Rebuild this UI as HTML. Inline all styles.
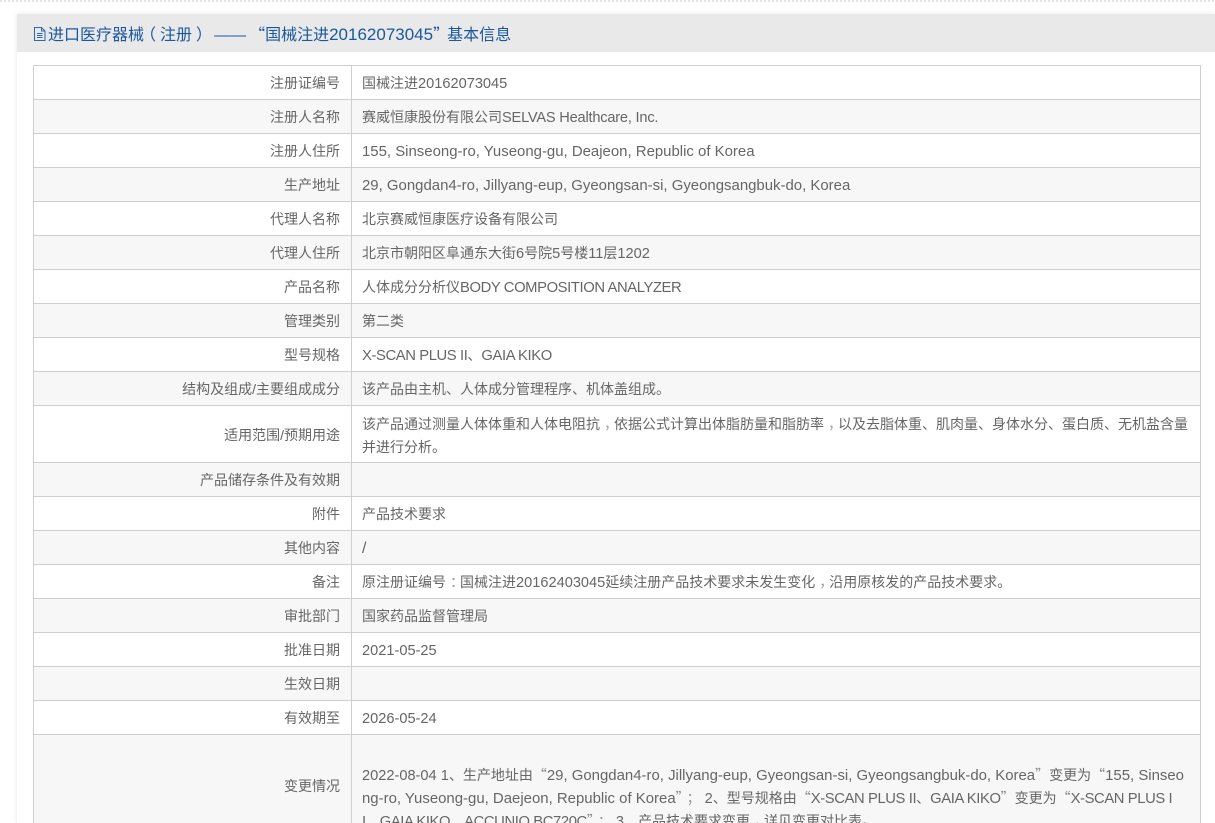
<!DOCTYPE html>
<html lang="zh-CN"><head><meta charset="utf-8"><title>基本信息</title>
<style>
html,body{margin:0;padding:0;width:1215px;height:823px;overflow:hidden;background:#fff}
body{position:relative;font-family:"Liberation Sans","Noto Sans CJK SC",sans-serif;font-size:14px;color:#666}
.dots{position:absolute;left:0;top:0;width:1215px;height:2px;background:repeating-linear-gradient(90deg,#e4e4e4 0 2px,#fff 2px 4px)}
.card{position:absolute;left:17px;top:14px;width:1198px;height:809px;background:#fff;box-shadow:0 0 4px rgba(0,0,0,.1)}
.ttl{position:absolute;left:48px;top:13px;line-height:40px;font-size:16px;color:#19589f;white-space:nowrap}
.ttl i{font-style:normal;font-size:17px}
.ttl em,td em{font-style:normal;font-family:"Noto Sans CJK SC",sans-serif}
td em{color:#888}
.ttl span{position:relative}
table{position:absolute;left:33px;top:65px;width:1168px;border-collapse:collapse;table-layout:fixed}
td{border:1px solid #cfcfcf;padding:2px 10px 0;height:33px;box-sizing:border-box;white-space:nowrap;overflow:hidden;line-height:23px}
tr{height:34px}
td:first-child{width:318px;text-align:right;padding-right:11px}
tr:nth-child(even) td{background:#f7f7f7}
b{font-weight:normal;font-size:14.6px;line-height:1}
b.l{font-size:14.95px}
b.u{font-size:14.8px;letter-spacing:-.4px}
s{text-decoration:none;position:relative;left:4px;color:#999}
s.g{margin-right:8px}
</style></head><body>
<div class="dots"></div>
<div class="card"></div>
<div style="position:absolute;left:17px;top:14px;width:1198px;height:38px;background:#e9e9e9"></div>
<svg style="position:absolute;left:34px;top:27px" width="12" height="14" viewBox="0 0 12 14" fill="none" stroke="#2a69ad" stroke-width="1"><path d="M.5 .5H7.5L11 4V13.5H.5Z M7.5 .5V4H11 M3 6.5H8.5 M3 8.5H8.5 M3 10.5H8.5"/></svg>
<div class="ttl">进口医疗器械<span style="left:-4px">（</span>注册<span style="left:4px">）</span><span style="margin-left:6px">——</span><em style="margin-left:3px">“</em>国械注进<i>20162073045</i><em style="margin-right:-2px">”</em>基本信息</div>
<table>
<tr><td>注册证编号</td><td>国械注进<b>20162073045</b></td></tr>
<tr><td>注册人名称</td><td>赛威恒康股份有限公司<b class="u" style="font-size:14.6px;letter-spacing:-.2px">SELVAS Healthcare, Inc.</b></td></tr>
<tr><td>注册人住所</td><td><b class="l">155, Sinseong-ro, Yuseong-gu, Deajeon, Republic of Korea</b></td></tr>
<tr><td>生产地址</td><td><b class="l">29, Gongdan4-ro, Jillyang-eup, Gyeongsan-si, Gyeongsangbuk-do, Korea</b></td></tr>
<tr><td>代理人名称</td><td>北京赛威恒康医疗设备有限公司</td></tr>
<tr><td>代理人住所</td><td>北京市朝阳区阜通东大街<b>6</b>号院<b>5</b>号楼<b>11</b>层<b>1202</b></td></tr>
<tr><td>产品名称</td><td>人体成分分析仪<b class="u">BODY COMPOSITION ANALYZER</b></td></tr>
<tr><td>管理类别</td><td>第二类</td></tr>
<tr><td>型号规格</td><td><b class="u">X-SCAN PLUS II</b>、<b class="u">GAIA KIKO</b></td></tr>
<tr><td>结构及组成/主要组成成分</td><td>该产品由主机、人体成分管理程序、机体盖组成。</td></tr>
<tr style="height:57px"><td>适用范围/预期用途</td><td style="padding-top:4px">该产品通过测量人体体重和人体电阻抗<s>，</s>依据公式计算出体脂肪量和脂肪率<s>，</s>以及去脂体重、肌肉量、身体水分、蛋白质、无机盐含量<br>并进行分析。</td></tr>
<tr><td>产品储存条件及有效期</td><td></td></tr>
<tr><td>附件</td><td>产品技术要求</td></tr>
<tr><td>其他内容</td><td><b style="font-size:16px">/</b></td></tr>
<tr><td>备注</td><td>原注册证编号<s>：</s>国械注进<b>20162403045</b>延续注册产品技术要求未发生变化<s>，</s>沿用原核发的产品技术要求。</td></tr>
<tr><td>审批部门</td><td>国家药品监督管理局</td></tr>
<tr><td>批准日期</td><td><b>2021-05-25</b></td></tr>
<tr><td>生效日期</td><td></td></tr>
<tr><td>有效期至</td><td><b>2026-05-24</b></td></tr>
<tr style="height:104px"><td style="background:#f7f7f7;padding-top:0">变更情况</td><td style="background:#f7f7f7;padding-top:24px"><b>2022-08-04 1</b>、生产地址由<em>“</em><b class="l">29, Gongdan4-ro, Jillyang-eup, Gyeongsan-si, Gyeongsangbuk-do, Korea</b><em>”</em>变更为<em>“</em><b class="l">155, Sinseo</b><br><b class="l">ng-ro, Yuseong-gu, Daejeon, Republic of Korea</b><em>”</em><s class="g">；</s><b>2</b>、型号规格由<em>“</em><b class="u">X-SCAN PLUS II</b>、<b class="u">GAIA KIKO</b><em>”</em>变更为<em>“</em><b class="u">X-SCAN PLUS I</b><br><b class="u">I</b>、<b class="u">GAIA KIKO</b>、<b class="u">ACCUNIQ BC720C</b><em>”</em><s class="g">；</s><b>3</b>、产品技术要求变更<s>，</s>详见变更对比表。</td></tr>
</table>
</body></html>
